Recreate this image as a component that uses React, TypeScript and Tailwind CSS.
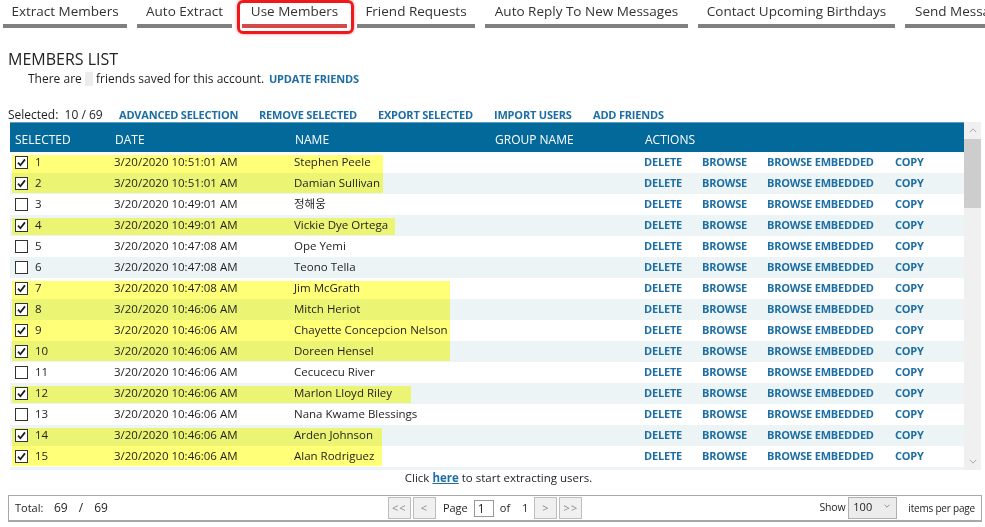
import React from "react";

const font = { fontFamily: '"Open Sans", "Noto Sans CJK KR", sans-serif' };

const tabs = [
  { label: "Extract Members", w: 124 },
  { label: "Auto Extract", w: 95 },
  { label: "Use Members", w: 105, active: true },
  { label: "Friend Requests", w: 118 },
  { label: "Auto Reply To New Messages", w: 203 },
  { label: "Contact Upcoming Birthdays", w: 197 },
  { label: "Send Messages", w: 140, left: true },
];

type Row = { n: number; time: string; name: string; checked: boolean; hl?: number };

const rows: Row[] = [
  { n: 1, time: "10:51:01", name: "Stephen Peele", checked: true, hl: 383 },
  { n: 2, time: "10:51:01", name: "Damian Sullivan", checked: true, hl: 383 },
  { n: 3, time: "10:49:01", name: "정해웅", checked: false },
  { n: 4, time: "10:49:01", name: "Vickie Dye Ortega", checked: true, hl: 395 },
  { n: 5, time: "10:47:08", name: "Ope Yemi", checked: false },
  { n: 6, time: "10:47:08", name: "Teono Tella", checked: false },
  { n: 7, time: "10:47:08", name: "Jim McGrath", checked: true, hl: 450 },
  { n: 8, time: "10:46:06", name: "Mitch Heriot", checked: true, hl: 450 },
  { n: 9, time: "10:46:06", name: "Chayette Concepcion Nelson", checked: true, hl: 450 },
  { n: 10, time: "10:46:06", name: "Doreen Hensel", checked: true, hl: 450 },
  { n: 11, time: "10:46:06", name: "Cecucecu River", checked: false },
  { n: 12, time: "10:46:06", name: "Marlon Lloyd Riley", checked: true, hl: 411 },
  { n: 13, time: "10:46:06", name: "Nana Kwame Blessings", checked: false },
  { n: 14, time: "10:46:06", name: "Arden Johnson", checked: true, hl: 382 },
  { n: 15, time: "10:46:06", name: "Alan Rodriguez", checked: true, hl: 382 },
  { n: 16, time: "10:46:06", name: "Kofi Mensah", checked: false },
];

const cols = "grid grid-cols-[100px_180px_200px_150px_58px_65px_128px_1fr]";

const Checkbox: React.FC<{ checked: boolean }> = ({ checked }) => (
  <span className="w-[13px] h-[13px] border border-[#333] bg-white flex items-center justify-center shrink-0">
    {checked && (
      <svg viewBox="0 0 12 12" className="w-[11px] h-[11px]">
        <path d="M2.2 6.2 L4.8 9 L9.8 2.6" stroke="#1a1a1a" strokeWidth="1.9" fill="none" />
      </svg>
    )}
  </span>
);

const Link: React.FC<{ children: React.ReactNode; className?: string }> = ({ children, className = "" }) => (
  <span className={`text-[11px] font-bold text-[#1c6ea4] tracking-[-0.2px] ${className}`}>{children}</span>
);

const TableRow: React.FC<{ row: Row; i: number }> = ({ row, i }) => {
  const prev = rows[i - 1];
  const next = rows[i + 1];
  const top = row.hl && !(prev && prev.hl) ? 3 : 0;
  const bottom = row.hl && !(next && next.hl) ? 1 : 0;
  return (
    <div
      className={`relative ${cols} h-[21px] items-center pb-[1px] text-[11.5px] text-[#1e1e1e] ${
        i % 2 === 1 ? "bg-[#ecf4f6]" : "bg-white"
      }`}
    >
      {row.hl && (
        <span
          className="absolute left-[2px] bg-[#ffff78] mix-blend-multiply"
          style={{ width: row.hl - 12, top, bottom }}
        />
      )}
      <div className="relative flex items-center gap-[7px] pl-[5px]">
        <Checkbox checked={row.checked} />
        <span>{row.n}</span>
      </div>
      <div className="relative pl-[4px]">3/20/2020 {row.time} AM</div>
      <div className="relative pl-[4px]">{row.name}</div>
      <div />
      <Link className="relative pl-[4px]">DELETE</Link>
      <Link className="relative pl-[4px]">BROWSE</Link>
      <Link className="relative pl-[4px]">BROWSE EMBEDDED</Link>
      <Link className="relative pl-[4px]">COPY</Link>
    </div>
  );
};

const Chevron: React.FC<{ up?: boolean }> = ({ up }) => (
  <svg viewBox="0 0 10 6" className="w-[8px] h-[5px]">
    <polyline
      points={up ? "1,5 5,1 9,5" : "1,1 5,5 9,1"}
      stroke="#a3a3a3"
      strokeWidth="1.2"
      fill="none"
    />
  </svg>
);

const PagerButton: React.FC<{ children: React.ReactNode }> = ({ children }) => (
  <span className="w-[23px] h-[22px] border border-[#bdbdbd] bg-[#f0f0f0] text-[#8a8a8a] text-[11px] flex items-center justify-center tracking-[1px]">
    {children}
  </span>
);

export default function App() {
  return (
    <div className="relative w-[985px] h-[527px] overflow-hidden bg-white text-[#1e1e1e]" style={font}>
      {/* Tabs */}
      <div className="flex gap-[10px] pl-[3px] h-[28px] whitespace-nowrap">
        {tabs.map((t) => (
          <div key={t.label} className="flex flex-col shrink-0" style={{ width: t.w }}>
            <div
              className={`h-[22px] flex items-center text-[13.5px] text-[#333] ${
                t.left ? "justify-start pl-[10px]" : "justify-center"
              }`}
            >
              {t.label}
            </div>
            <div className={`mt-[2px] h-[4px] ${t.active ? "bg-[#d24a4a]" : "bg-[#808080]"}`} />
          </div>
        ))}
      </div>
      <div className="absolute left-[237px] top-0 w-[117px] h-[34px] border-[3px] border-[#f01818] rounded-[6px] shadow-[0_0_3px_rgba(240,24,24,0.5)]" />

      {/* Title */}
      <div className="mt-[21px] h-[20px] flex items-center pl-[8px] text-[16px] text-[#222]">MEMBERS LIST</div>
      <div className="mt-[2px] h-[16px] flex items-center pl-[28px] text-[12px]">
        <span className="w-[241px] flex items-center">
          There are&nbsp;
          <span className="inline-block w-[8px] h-[14px] bg-[#ececec]" />
          &nbsp;friends saved for this account.
        </span>
        <Link>UPDATE FRIENDS</Link>
      </div>

      {/* Selection toolbar */}
      <div className="mt-[21px] h-[14px] leading-[14px] flex items-center pl-[8px] text-[12px] whitespace-nowrap">
        <span className="w-[111px]">Selected:&nbsp; 10 / 69</span>
        <Link className="w-[140px]">ADVANCED SELECTION</Link>
        <Link className="w-[119px]">REMOVE SELECTED</Link>
        <Link className="w-[116px]">EXPORT SELECTED</Link>
        <Link className="w-[99px]">IMPORT USERS</Link>
        <Link>ADD FRIENDS</Link>
      </div>

      {/* Table */}
      <div className="ml-[10px] w-[971px] h-[348px] flex">
        <div className="w-[954px] h-full overflow-hidden whitespace-nowrap">
          <div className={`${cols} h-[30px] items-center pt-[4px] bg-[#03699a] border-t border-[#5b9ec4] text-white text-[12px]`}>
            <div className="pl-[5px]">SELECTED</div>
            <div className="pl-[5px]">DATE</div>
            <div className="pl-[5px]">NAME</div>
            <div className="pl-[5px]">GROUP NAME</div>
            <div className="pl-[5px] col-span-4">ACTIONS</div>
          </div>
          {rows.map((r, i) => (
            <TableRow key={r.n} row={r} i={i} />
          ))}
        </div>
        <div className="w-[17px] h-full bg-[#f0f0f0] flex flex-col">
          <div className="h-[17px] flex items-center justify-center">
            <Chevron up />
          </div>
          <div className="h-[69px] bg-[#cdcdcd]" />
          <div className="flex-1" />
          <div className="h-[17px] flex items-center justify-center">
            <Chevron />
          </div>
        </div>
      </div>

      <div className="h-[15px] leading-[15px] flex items-center justify-center text-[11.5px] pl-[12px]">
        Click&nbsp;<span className="font-bold text-[#1c6ea4] underline">here</span>&nbsp;to start extracting users.
      </div>

      {/* Footer / pager */}
      <div className="mt-[10px] ml-[8px] w-[974px] h-[27px] border border-[#a8a8a8] border-b-2 flex items-center text-[11px] whitespace-nowrap">
        <span className="pl-[6px] w-[45px]">Total:</span>
        <span className="text-[12px]">69</span>
        <span className="text-[12px] ml-[11px]">/</span>
        <span className="text-[12px] ml-[11px]">69</span>
        <div className="ml-[280px] flex items-center">
          <PagerButton>&lt;&lt;</PagerButton>
          <span className="ml-[2px]" />
          <PagerButton>&lt;</PagerButton>
          <span className="ml-[7px]">Page</span>
          <span className="ml-[6px] w-[20px] h-[17px] border border-[#9a9a9a] bg-white text-[12px] leading-[15px] pl-[3px]">1</span>
          <span className="ml-[6px]">of</span>
          <span className="ml-[12px]">1</span>
          <span className="ml-[6px]" />
          <PagerButton>&gt;</PagerButton>
          <span className="ml-[2px]" />
          <PagerButton>&gt;&gt;</PagerButton>
        </div>
        <span className="ml-auto text-[10.5px] tracking-[-0.2px]">Show</span>
        <span className="ml-[3px] w-[49px] h-[22px] border border-[#b0b0b0] bg-[#ececec] flex items-start justify-between pl-[4px] pr-[6px] pt-[1px]">
          <span>100</span>
          <span className="mt-[5px]">
            <svg viewBox="0 0 10 6" className="w-[6px] h-[4px]">
              <polyline points="1,1 5,5 9,1" stroke="#777" strokeWidth="1.3" fill="none" />
            </svg>
          </span>
        </span>
        <span className="ml-[11px] pr-[6px] text-[10px] tracking-[-0.2px]">items per page</span>
      </div>
    </div>
  );
}
